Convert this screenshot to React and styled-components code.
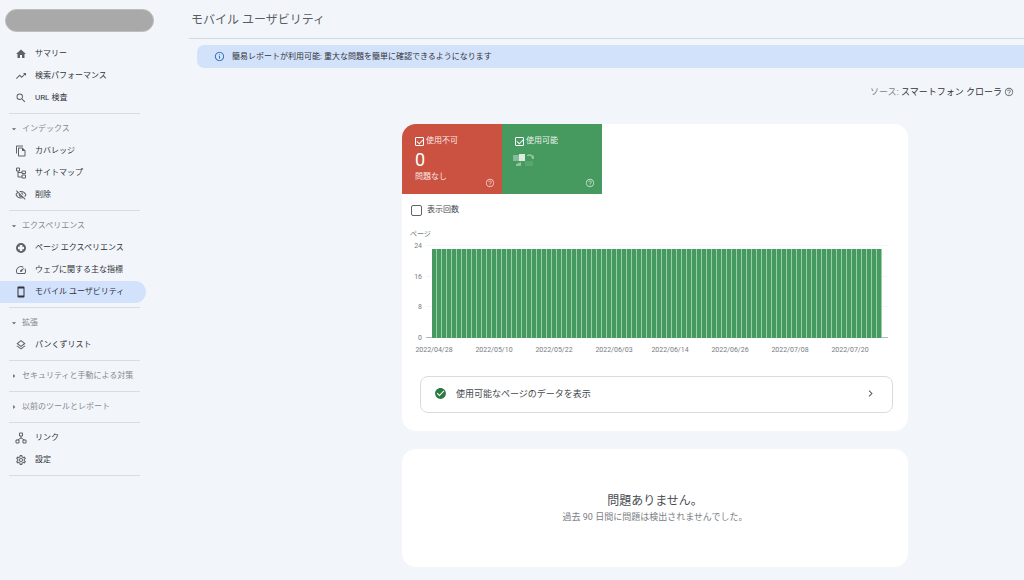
import React from "react";
import styled, { createGlobalStyle } from "styled-components";
import {
  MdHome,
  MdTrendingUp,
  MdSearch,
  MdOutlineFileCopy,
  MdOutlineVisibilityOff,
  MdOutlineSpeed,
  MdOutlineLayers,
  MdOutlineSettings,
  MdSmartphone,
  MdHelpOutline,
  MdInfoOutline,
  MdCheckCircle,
  MdChevronRight,
  MdArrowDropDown,
  MdArrowRight,
} from "react-icons/md";

const GlobalStyle = createGlobalStyle`
  * { box-sizing: border-box; }
  body {
    margin: 0;
    background: #f2f6fb;
    color: #45484d;
    font: 400 8px/12px Roboto, "Noto Sans CJK JP", sans-serif;
  }
  button, input { font: inherit; color: inherit; margin: 0; }
  h1, h2, p, ul { margin: 0; padding: 0; font-weight: 400; }
  svg { display: block; flex: none; }
`;

const Layout = styled.div`
  display: flex;
  min-height: 100vh;
`;

const Sidebar = styled.nav`
  flex: none;
  width: 189px;
  padding-top: 9px;
`;

const PropertyButton = styled.button`
  display: block;
  width: 149px;
  height: 23px;
  margin: 0 0 7px 5px;
  border: 1px solid #bcbdbf;
  border-radius: 12px;
  background: #a9a9a9;
`;

const NavGroup = styled.section`
  padding: 4px 0 4px;
  width: 146px;
`;

const Divider = styled.hr`
  width: 131px;
  height: 1px;
  margin: 0 0 0 9px;
  border: 0;
  background: #d9dce1;
`;

const GroupToggle = styled.button`
  display: flex;
  align-items: center;
  gap: 3px;
  width: 100%;
  height: 22px;
  padding: 0 0 0 9px;
  border: 0;
  background: none;
  color: #85898f;
  white-space: nowrap;
  svg { color: #5f6368; }
`;

const NavList = styled.ul`
  list-style: none;
`;

const NavLink = styled.a`
  display: flex;
  align-items: center;
  gap: 8px;
  height: 22px;
  padding-left: 15px;
  border-radius: 0 11px 11px 0;
  background: ${(p) => (p.$active ? "#d3e2fc" : "transparent")};
  color: #303338;
  text-decoration: none;
  white-space: nowrap;
  svg { color: ${(p) => (p.$active ? "#303338" : "#5f6368")}; }
`;

const Main = styled.main`
  flex: 1;
  min-width: 0;
`;

const PageHeader = styled.header`
  display: flex;
  align-items: center;
  height: 39px;
  padding: 2px 0 0 2px;
  border-bottom: 1px solid #d3dae3;
`;

const Title = styled.h1`
  font-size: 12px;
  line-height: 16px;
  color: #5a5d62;
`;

const Banner = styled.div`
  display: flex;
  align-items: center;
  gap: 7px;
  height: 23px;
  margin: 6px 0 0 8px;
  padding-left: 17px;
  border-radius: 7px 0 0 7px;
  background: #d3e2fb;
  color: #303338;
  svg { color: #2f6fb5; }
`;

const SourceRow = styled.div`
  display: flex;
  align-items: center;
  justify-content: flex-end;
  gap: 2px;
  height: 56px;
  padding: 0 10px 9px 0;
  font-size: 9px;
  color: #80848a;
  strong { font-weight: 400; color: #303338; }
`;

const IconButton = styled.button`
  display: flex;
  padding: 0;
  border: 0;
  background: none;
  color: ${(p) => (p.$light ? "rgba(255,255,255,.65)" : "#6b6f74")};
`;

const Content = styled.div`
  display: flex;
  flex-direction: column;
  align-items: center;
  gap: 18px;
  padding: 0 0 13px 97px;
`;

const Card = styled.section`
  width: 100%;
  max-width: 506px;
  border-radius: 14px;
  background: #fff;
  overflow: hidden;
`;

const Tiles = styled.div`
  display: flex;
`;

const Tile = styled.div`
  display: flex;
  flex-direction: column;
  position: relative;
  width: 100px;
  height: 70px;
  padding: 11px 0 0 13px;
  background: ${(p) => p.$color};
  color: rgba(255, 255, 255, .9);
`;

const TileHelp = styled.div`
  position: absolute;
  right: 7px;
  bottom: 6px;
`;

const CheckLabel = styled.label`
  display: flex;
  align-items: center;
  gap: ${(p) => (p.$large ? 5 : 2)}px;
`;

const Checkbox = styled.input.attrs({ type: "checkbox" })`
  appearance: none;
  position: relative;
  width: ${(p) => (p.$large ? 11 : 9)}px;
  height: ${(p) => (p.$large ? 11 : 9)}px;
  border: 1px solid ${(p) => (p.$large ? "#5f6368" : "#fff")};
  border-radius: ${(p) => (p.$large ? 2 : 1)}px;
  &:checked::after {
    content: "";
    position: absolute;
    left: 1px;
    top: 1px;
    width: 5px;
    height: 3px;
    border: solid currentColor;
    border-width: 0 0 1px 1px;
    transform: rotate(-45deg);
  }
`;

const Count = styled.strong`
  padding-top: 2px;
  font-size: 18px;
  line-height: 22px;
  font-weight: 400;
  color: #fff;
`;

const Mosaic = styled.svg`
  margin: 5px 0 0 -4px;
`;

const MetricRow = styled.div`
  display: flex;
  align-items: center;
  height: 32px;
  padding-left: 9px;
`;

const Chart = styled.svg`
  width: 100%;
  height: auto;
  text {
    font-family: Roboto, "Noto Sans CJK JP", sans-serif;
    font-size: 7px;
    fill: #777b80;
  }
`;

const DataButton = styled.button`
  display: flex;
  align-items: center;
  gap: 9px;
  width: calc(100% - 33px);
  height: 37px;
  margin: 17px 15px 18px 18px;
  padding: 0 15px 2px 13px;
  border: 1px solid #d9dbde;
  border-radius: 8px;
  background: #fff;
  font-size: 9px;
  text-align: left;
  span { flex: 1; }
`;

const EmptyCard = styled(Card)`
  padding: 43px 0;
  text-align: center;
`;

const EmptyTitle = styled.h2`
  font-size: 12px;
  line-height: 18px;
  color: #4a4d52;
`;

const EmptyText = styled.p`
  font-size: 9px;
  line-height: 14px;
  color: #7c8085;
`;

const Stroke = ({ children }) => (
  <svg width="12" height="12" viewBox="0 0 24 24" fill="none" stroke="currentColor" strokeWidth="2">
    {children}
  </svg>
);

const SitemapIcon = () => (
  <Stroke>
    <path d="M3 2h6v6H3zM14 8h7v5h-7zM14 16h7v6h-7zM6 8v12h8M6 11h8" />
  </Stroke>
);

const LinksIcon = () => (
  <Stroke>
    <path d="M9 2h6v6H9zM2 16h6v6H2zM16 16h6v6h-6zM12 8v4M5 16l7-4 7 4" />
  </Stroke>
);

const PageExperienceIcon = () => (
  <svg width="12" height="12" viewBox="0 0 24 24">
    <path
      fill="currentColor"
      fillRule="evenodd"
      d="M12 2a10 10 0 1 0 0 20 10 10 0 0 0 0-20Zm-2.500 4h5v3.500H18v5h-3.500V18h-5v-3.500H6v-5h3.500Z"
    />
  </svg>
);

const groups = [
  {
    items: [
      ["サマリー", MdHome],
      ["検索パフォーマンス", MdTrendingUp],
      ["URL 検査", MdSearch],
    ],
  },
  {
    title: "インデックス",
    items: [
      ["カバレッジ", MdOutlineFileCopy],
      ["サイトマップ", SitemapIcon],
      ["削除", MdOutlineVisibilityOff],
    ],
  },
  {
    title: "エクスペリエンス",
    items: [
      ["ページ エクスペリエンス", PageExperienceIcon],
      ["ウェブに関する主な指標", MdOutlineSpeed],
      ["モバイル ユーザビリティ", MdSmartphone, true],
    ],
  },
  { title: "拡張", items: [["パンくずリスト", MdOutlineLayers]] },
  { title: "セキュリティと手動による対策", items: [] },
  { title: "以前のツールとレポート", items: [] },
  {
    items: [
      ["リンク", LinksIcon],
      ["設定", MdOutlineSettings],
    ],
  },
];

const ticks = [24, 16, 8, 0];
const dates = [
  ["2022/04/28", 32],
  ["2022/05/10", 92],
  ["2022/05/22", 152],
  ["2022/06/03", 212],
  ["2022/06/14", 268],
  ["2022/06/26", 328],
  ["2022/07/08", 388],
  ["2022/07/20", 448],
];
const pages = Array.from({ length: 90 }, () => 23);
const yOf = (v) => 112 - (v / 24) * 92;

function PagesChart() {
  return (
    <Chart viewBox="0 0 506 133" role="img" aria-label="ページ">
      <text x="8" y="10">ページ</text>
      {ticks.map((t) => (
        <g key={t}>
          <path d={`M24 ${Math.round(yOf(t)) - 0.5}H486`} stroke={t ? "#f4f5f6" : "#b5b8bb"} />
          <text x="20" y={Math.round(yOf(t)) + 2} textAnchor="end">{t}</text>
        </g>
      ))}
      <rect x="30" y="23" width="450" height="89" fill="#9dceaa" />
      {pages.map((v, i) => (
        <rect key={i} x={30 + i * 5} y="23" width="4" height={Math.round((v / 24) * 92) + 1} fill="#479a5f" />
      ))}
      {dates.map(([d, x]) => (
        <text key={d} x={x} y="126" textAnchor="middle">{d}</text>
      ))}
    </Chart>
  );
}

function SideNav() {
  return (
    <Sidebar>
      <PropertyButton aria-label="プロパティ" />
      {groups.map((g, i) => (
        <React.Fragment key={i}>
          <NavGroup>
            {g.title && (
              <GroupToggle aria-expanded={g.items.length > 0}>
                {g.items.length ? <MdArrowDropDown size={10} /> : <MdArrowRight size={10} />}
                {g.title}
              </GroupToggle>
            )}
            <NavList>
              {g.items.map(([label, Icon, active]) => (
                <li key={label}>
                  <NavLink href="#" $active={active} aria-current={active ? "page" : undefined}>
                    <Icon size={12} />
                    {label}
                  </NavLink>
                </li>
              ))}
            </NavList>
          </NavGroup>
          <Divider />
        </React.Fragment>
      ))}
    </Sidebar>
  );
}

export default function App() {
  return (
    <>
      <GlobalStyle />
      <Layout>
        <SideNav />
        <Main>
          <PageHeader>
            <Title>モバイル ユーザビリティ</Title>
          </PageHeader>
          <Banner>
            <MdInfoOutline size={11} />
            簡易レポートが利用可能: 重大な問題を簡単に確認できるようになります
          </Banner>
          <SourceRow>
            <span>ソース: <strong>スマートフォン クローラ</strong></span>
            <IconButton aria-label="ヘルプ"><MdHelpOutline size={10} /></IconButton>
          </SourceRow>
          <Content>
            <Card>
              <Tiles>
                <Tile $color="#cb5141">
                  <CheckLabel><Checkbox defaultChecked />使用不可</CheckLabel>
                  <Count>0</Count>
                  <span>問題なし</span>
                  <TileHelp>
                    <IconButton $light aria-label="ヘルプ"><MdHelpOutline size={10} /></IconButton>
                  </TileHelp>
                </Tile>
                <Tile $color="#479a5f">
                  <CheckLabel><Checkbox defaultChecked />使用可能</CheckLabel>
                  <Mosaic width="26" height="16" viewBox="0 0 26 16" fill="#fff">
                    <path d="M2 3h6v6H2z" opacity=".35" />
                    <path d="M8 2h6v7H8z" opacity=".8" />
                    <path d="M5 12l5-2v4H5z" opacity=".4" />
                    <path d="M16 3l3-1 4 2v3h-2l-1-3h-4z" opacity=".4" />
                    <path d="M14 9h8v5h-8z" opacity=".1" />
                  </Mosaic>
                  <TileHelp>
                    <IconButton $light aria-label="ヘルプ"><MdHelpOutline size={10} /></IconButton>
                  </TileHelp>
                </Tile>
              </Tiles>
              <MetricRow>
                <CheckLabel $large><Checkbox $large />表示回数</CheckLabel>
              </MetricRow>
              <PagesChart />
              <DataButton>
                <MdCheckCircle size={13} color="#2c7a43" />
                <span>使用可能なページのデータを表示</span>
                <MdChevronRight size={13} color="#5f6368" />
              </DataButton>
            </Card>
            <EmptyCard>
              <EmptyTitle>問題ありません。</EmptyTitle>
              <EmptyText>過去 90 日間に問題は検出されませんでした。</EmptyText>
            </EmptyCard>
          </Content>
        </Main>
      </Layout>
    </>
  );
}
